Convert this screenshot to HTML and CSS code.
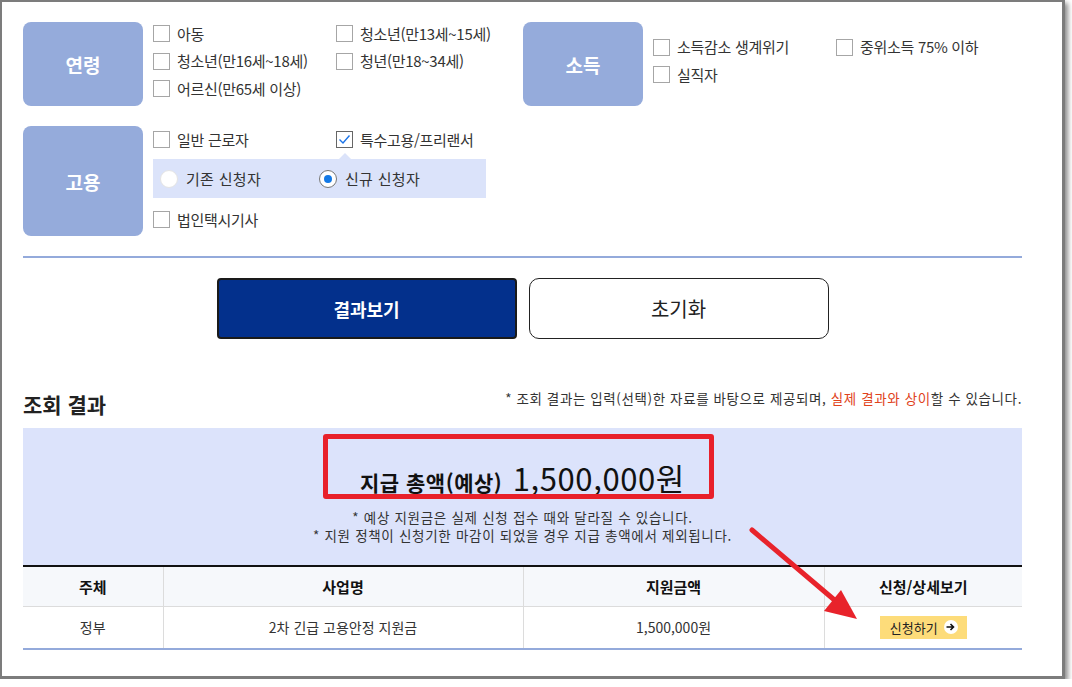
FILE: index.html
```html
<!DOCTYPE html>
<html lang="ko">
<head>
  <meta charset="UTF-8" />
  <title>지원금 조회</title>
  <meta name="viewport" content="width=device-width, initial-scale=1.0" />
  <link rel="stylesheet" href="styles.css">
</head>
<body>

<div class="window">
  <div class="content">

    <div class="filters">
      <div class="group">
        <div class="group-label">연령</div>
        <div class="options">
          <label class="chk"><span class="box"></span>아동</label>
          <label class="chk"><span class="box"></span>청소년(만13세~15세)</label>
          <label class="chk"><span class="box"></span>청소년(만16세~18세)</label>
          <label class="chk"><span class="box"></span>청년(만18~34세)</label>
          <label class="chk"><span class="box"></span>어르신(만65세 이상)</label>
        </div>
      </div>

      <div class="group">
        <div class="group-label">소득</div>
        <div class="options">
          <label class="chk"><span class="box"></span>소득감소 생계위기</label>
          <label class="chk"><span class="box"></span>중위소득 75% 이하</label>
          <label class="chk"><span class="box"></span>실직자</label>
        </div>
      </div>

      <div class="group group-job">
        <div class="group-label">고용</div>
        <div class="job-options">
          <div class="options">
            <label class="chk"><span class="box"></span>일반 근로자</label>
            <label class="chk"><span class="box checked">
              <svg width="13" height="11" viewBox="0 0 13 11"><path d="M1.5 5.5 L5 9 L11.5 1.5" fill="none" stroke="#1a73e8" stroke-width="1.4"/></svg>
            </span>특수고용/프리랜서</label>
          </div>
          <div class="sub-panel">
            <label class="radio"><span class="circle"></span>기존 신청자</label>
            <label class="radio"><span class="circle on"></span>신규 신청자</label>
          </div>
          <div class="options">
            <label class="chk"><span class="box"></span>법인택시기사</label>
          </div>
        </div>
      </div>
    </div>

    <hr class="divider">

    <div class="actions">
      <button class="btn btn-primary">결과보기</button>
      <button class="btn btn-reset">초기화</button>
    </div>

    <div class="result-head">
      <h3>조회 결과</h3>
      <p class="result-note">* 조회 결과는 입력(선택)한 자료를 바탕으로 제공되며, <span class="warn">실제 결과와 상이</span>할 수 있습니다.</p>
    </div>

    <div class="total-box">
      <div class="total-line">
        <strong>지급 총액(예상)</strong>
        <span class="amount">1,500,000원</span>
      </div>
      <p class="total-note">* 예상 지원금은 실제 신청 접수 때와 달라질 수 있습니다.<br>* 지원 정책이 신청기한 마감이 되었을 경우 지급 총액에서 제외됩니다.</p>
      <div class="mark-box"></div>
    </div>

    <table class="result-table">
      <colgroup>
        <col style="width:140px">
        <col style="width:360px">
        <col style="width:301px">
        <col style="width:198px">
      </colgroup>
      <thead>
        <tr>
          <th>주체</th>
          <th>사업명</th>
          <th>지원금액</th>
          <th>신청/상세보기</th>
        </tr>
      </thead>
      <tbody>
        <tr>
          <td>정부</td>
          <td>2차 긴급 고용안정 지원금</td>
          <td>1,500,000원</td>
          <td>
            <a class="apply-btn">신청하기
              <span class="go">
                <svg width="9" height="8" viewBox="0 0 9 8"><path d="M0.5 4 H7.5 M4.5 1 L7.5 4 L4.5 7" fill="none" stroke="#111" stroke-width="1.6"/></svg>
              </span>
            </a>
          </td>
        </tr>
      </tbody>
    </table>

  </div>
</div>

<!-- 강조 화살표 -->
<svg class="arrow" width="1072" height="687" viewBox="0 0 1072 687">
  <line x1="752" y1="530" x2="838" y2="603" stroke="#e8232b" stroke-width="5" stroke-linecap="round"/>
  <polygon points="857,619 824,611 841,590" fill="#e8232b"/>
</svg>

</body>
</html>
```

FILE: styles.css
```css
* {
  box-sizing: border-box;
}

body {
  margin: 0;
  background: #fff;
  font-family: 'Noto Sans CJK KR', 'Noto Sans', sans-serif;
  color: #333;
  position: relative;
}

.window {
  width: 1065px;
  height: 679px;
  border-top: 2px solid #7c7c7c;
  border-left: 2px solid #7c7c7c;
  border-right: 3px solid #7c7c7c;
  border-bottom: 3px solid #7c7c7c;
  box-shadow: 3px 3px 5px rgba(0, 0, 0, 0.45);
  padding: 20px 0 0 21px;
  overflow: hidden;
}

.content {
  width: 999px;
}

/* 조건 선택 */
.filters {
  display: grid;
  grid-template-columns: 500px 499px;
  row-gap: 20px;
}

.group {
  display: flex;
  gap: 10px;
}

.group-label {
  width: 120px;
  height: 84px;
  flex-shrink: 0;
  border-radius: 8px;
  background: #95abdb;
  color: #fff;
  font-size: 19px;
  font-weight: 700;
  display: flex;
  align-items: center;
  justify-content: center;
}

.group-job .group-label {
  height: 110px;
}

.options {
  display: grid;
  grid-template-columns: 183px 183px;
  grid-auto-rows: 27.5px;
  align-self: center;
  margin-top: -6px;
}

.job-options {
  display: flex;
  flex-direction: column;
}

.job-options .options {
  margin-top: 0;
  align-self: flex-start;
  grid-auto-rows: 27px;
}

.chk {
  display: flex;
  align-items: center;
  font-size: 15px;
  line-height: 20px;
  color: #333;
  white-space: nowrap;
  letter-spacing: -0.3px;
}

.box {
  width: 17px;
  height: 17px;
  border: 1px solid #a6a6a6;
  background: #fff;
  margin-right: 7px;
  display: flex;
  align-items: center;
  justify-content: center;
}

.box.checked {
  border-color: #666;
}

.sub-panel {
  position: relative;
  width: 333px;
  height: 39px;
  margin: 6px 0 8px;
  background: #dbe3fa;
  display: flex;
  align-items: center;
  padding-left: 7px;
}

.sub-panel::before {
  content: '';
  position: absolute;
  left: 186px;
  top: -6px;
  border-left: 6px solid transparent;
  border-right: 6px solid transparent;
  border-bottom: 6px solid #dbe3fa;
}

.radio {
  width: 159px;
  display: flex;
  align-items: center;
  gap: 8px;
  font-size: 15px;
  line-height: 20px;
  color: #333;
  letter-spacing: 0.3px;
}

.circle {
  width: 18px;
  height: 18px;
  border-radius: 50%;
  background: #fff;
  border: 1px solid #e4e4e4;
  display: flex;
  align-items: center;
  justify-content: center;
}

.circle.on {
  border-color: #767676;
}

.circle.on::after {
  content: '';
  width: 8px;
  height: 8px;
  border-radius: 50%;
  background: #1479e6;
}

.divider {
  border: 0;
  height: 2px;
  background: #94aadb;
  margin: 20px 0 0;
}

/* 버튼 */
.actions {
  display: flex;
  justify-content: center;
  gap: 12px;
  margin-top: 20px;
}

.btn {
  width: 300px;
  height: 61px;
  font-family: inherit;
  cursor: pointer;
}

.btn-primary {
  background: #03308c;
  border: 2px solid #1a1a1a;
  border-radius: 4px;
  color: #fff;
  font-size: 18px;
  font-weight: 700;
}

.btn-reset {
  background: #fff;
  border: 1px solid #222;
  border-radius: 10px;
  color: #222;
  font-size: 20px;
}

/* 조회 결과 */
.result-head {
  display: flex;
  justify-content: space-between;
  align-items: flex-start;
  margin-top: 50px;
  height: 39px;
}

.result-head h3 {
  margin: 0;
  font-size: 21px;
  line-height: 30px;
  font-weight: 700;
  color: #222;
}

.result-note {
  margin: 0;
  font-size: 13.5px;
  line-height: 18px;
  color: #333;
  letter-spacing: 0.6px;
}

.warn {
  color: #e0421b;
}

.total-box {
  position: relative;
  background: #dce3fb;
  height: 137px;
  padding-top: 30px;
  text-align: center;
}

.total-line {
  height: 40px;
  line-height: 40px;
  color: #111;
}

.total-line strong {
  font-size: 21px;
  font-weight: 700;
  margin-right: 6px;
  letter-spacing: 0.5px;
}

.amount {
  font-size: 31px;
  font-weight: 400;
  letter-spacing: 0.6px;
}

.total-note {
  margin: 10px 0 0;
  font-size: 13.5px;
  line-height: 18px;
  color: #333;
  letter-spacing: 0.7px;
}

.mark-box {
  position: absolute;
  left: 300px;
  top: 6px;
  width: 391px;
  height: 65px;
  border: 5px solid #e8202a;
  border-radius: 3px;
}

.result-table {
  width: 999px;
  border-collapse: collapse;
  table-layout: fixed;
  border-top: 2px solid #111;
  border-bottom: 2px solid #94aadb;
}

.result-table th {
  height: 40px;
  background: #f6f8fb;
  font-size: 15px;
  font-weight: 700;
  color: #111;
  border-left: 1px solid #dcdcdc;
  border-bottom: 1px solid #dcdcdc;
}

.result-table td {
  height: 43px;
  text-align: center;
  font-size: 14px;
  color: #333;
  border-left: 1px solid #dcdcdc;
}

.result-table th:first-child,
.result-table td:first-child {
  border-left: 0;
}

.apply-btn {
  display: inline-flex;
  align-items: center;
  gap: 6px;
  height: 23px;
  padding: 0 9px 0 10px;
  background: #fddc7a;
  font-size: 13px;
  color: #222;
}

.go {
  width: 14px;
  height: 14px;
  border-radius: 50%;
  background: #fff;
  display: flex;
  align-items: center;
  justify-content: center;
}

.arrow {
  position: absolute;
  left: 0;
  top: 0;
  pointer-events: none;
}
```
